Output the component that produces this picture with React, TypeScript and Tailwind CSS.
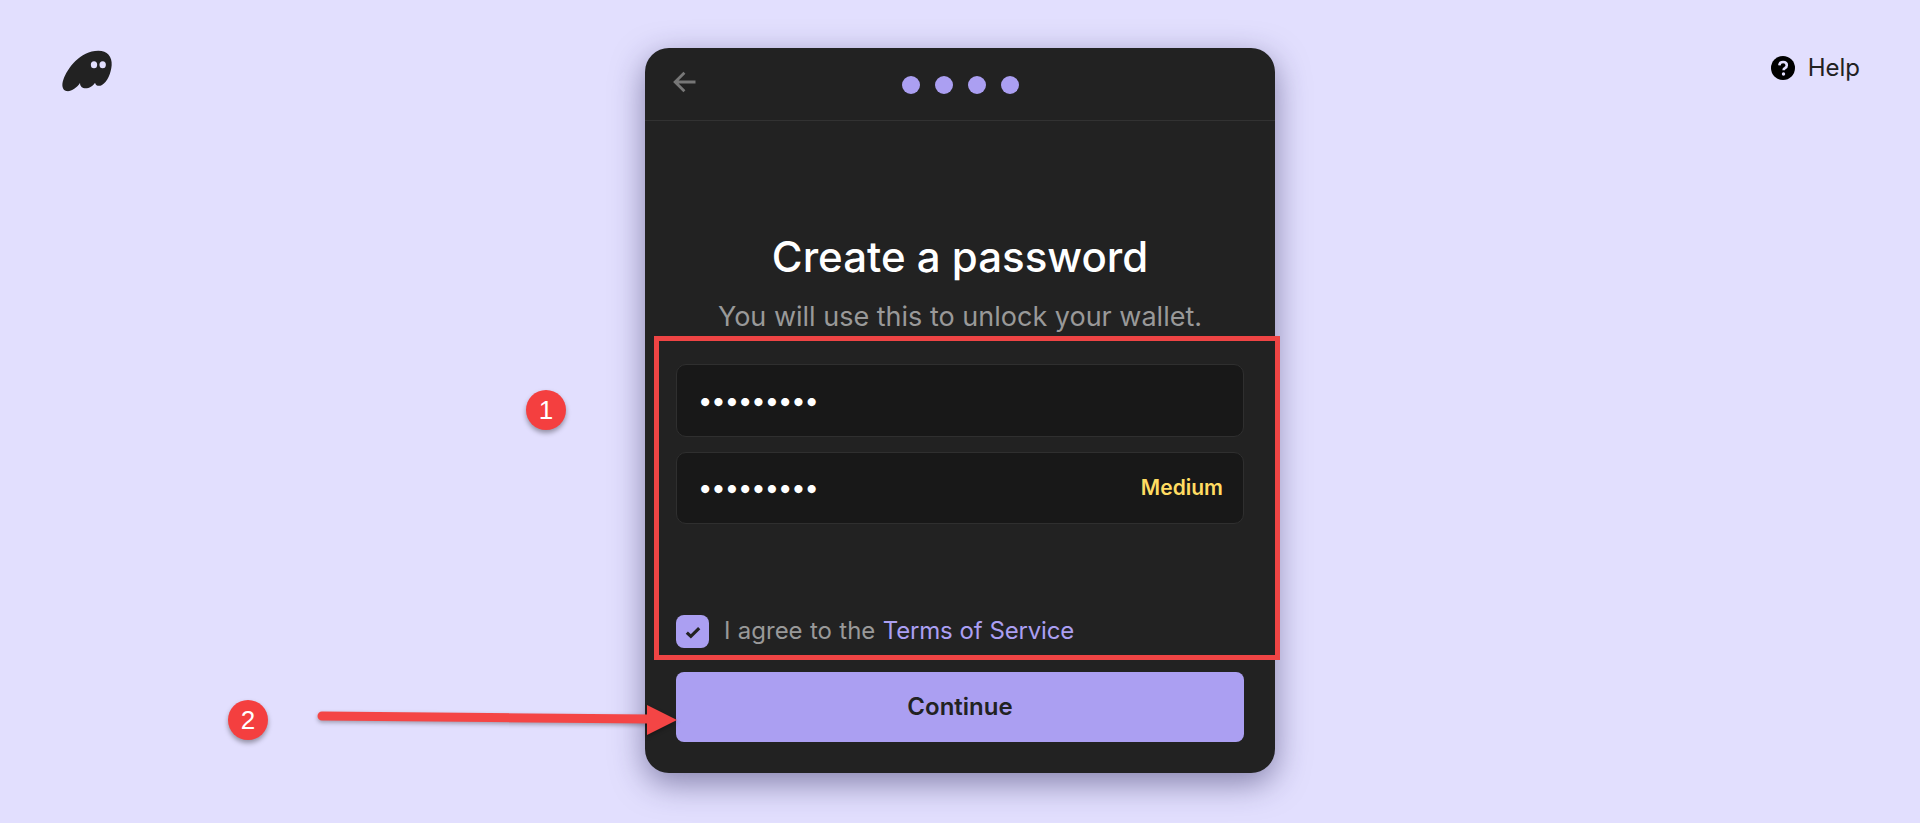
import React from "react";

const font = { fontFamily: "Inter, 'Liberation Sans', sans-serif" };

function Logo() {
  return (
    <svg viewBox="90 70 165 140" className="h-[46.67px] w-[55px]">
      <path
        fill="#222222"
        d="M205 78C232 78 247 96 245 122C243 146 232 172 216 181C207 186 198 184 195 174C188 186 172 194 160 190C153 188 150 182 150 175C140 190 122 202 109 199C97 196 94 181 100 165C112 131 150 78 205 78Z"
      />
      <ellipse cx="192" cy="120" rx="9.5" ry="10.5" fill="#e2dffe" />
      <ellipse cx="218" cy="120" rx="9.5" ry="10.5" fill="#e2dffe" />
    </svg>
  );
}

function PasswordField({ tall, children }: { tall?: boolean; children?: React.ReactNode }) {
  return (
    <div className={tall ? "flex h-[73px] items-center justify-between rounded-[10px] border border-[#2f2f2f] bg-[#181818] pl-[22px] pr-[20px]" : "flex h-[72px] items-center justify-between rounded-[10px] border border-[#2f2f2f] bg-[#181818] pl-[22px] pr-[20px]"}>
      <span className="text-[26px] font-bold leading-none tracking-[1px] text-white">•••••••••</span>
      {children}
    </div>
  );
}

export default function App() {
  return (
    <div style={font} className="relative grid h-[823px] grid-cols-[1fr_630px_1fr] overflow-hidden bg-[#e2dffe] pt-[48px]">
      <div className="pl-[60px]">
        <Logo />
      </div>

      <main className="flex h-[725px] flex-col rounded-[24px] bg-[#222222] shadow-[0_10px_32px_rgba(40,35,90,0.5)]">
        <header className="relative flex h-[73px] items-center justify-center border-b border-[#323232] pt-[2px]">
          <svg viewBox="0 0 24 24" className="absolute left-[26px] top-[20px] h-[28px] w-[28px] fill-none stroke-[#777777] stroke-[2.4]">
            <path d="M21 12H4M11.500 4L3.500 12l8 8" />
          </svg>
          <div className="flex gap-[15px]">
            <span className="h-[18px] w-[18px] rounded-full bg-[#ab9ff2]" />
            <span className="h-[18px] w-[18px] rounded-full bg-[#ab9ff2]" />
            <span className="h-[18px] w-[18px] rounded-full bg-[#ab9ff2]" />
            <span className="h-[18px] w-[18px] rounded-full bg-[#ab9ff2]" />
          </div>
        </header>

        <div className="flex flex-1 flex-col px-[31px]">
          <h1 className="mt-[111px] text-center text-[42px] font-medium leading-[50px] text-white">Create a password</h1>
          <p className="mt-[19px] text-center text-[27px] leading-[32px] text-[#999999]">You will use this to unlock your wallet.</p>
          <div className="mt-[31px] flex flex-col gap-[15px]">
            <PasswordField tall />
            <PasswordField>
              <span className="text-[21px] font-semibold text-[#ffdc62]">Medium</span>
            </PasswordField>
          </div>
          <label className="mt-[91px] flex items-center gap-[15px]">
            <span className="flex h-[33px] w-[33px] items-center justify-center rounded-[8px] bg-[#ab9ff2]">
              <svg viewBox="0 0 16 16" className="h-[18px] w-[18px] fill-none stroke-[#222222] stroke-[2.8]">
                <path d="M2.500 8.500l3.600 3.400L13.500 4.500" />
              </svg>
            </span>
            <span className="-translate-y-px text-[24px] leading-[30px] text-[#999999] [word-spacing:0.6px]">
              I agree to the <span className="tracking-[-0.2px] text-[#ab9ff2]">Terms of Service</span>
            </span>
          </label>
          <button className="mt-[24px] h-[70px] w-full rounded-[8px] bg-[#ab9ff2] text-[24px] font-semibold text-[#222222]">Continue</button>
        </div>
      </main>

      <div className="flex justify-end pr-[60px] pt-[5px]">
        <div className="flex h-[30px] items-center gap-[13px] text-[24px] text-[#222222]">
          <svg viewBox="0 0 24 24" className="h-[24px] w-[24px]">
            <circle cx="12" cy="12" r="12" fill="#000000" />
            <path d="M8.300 9.300C8.500 7.200 10 6 12.100 6c2.200 0 3.700 1.300 3.700 3.200 0 1.500-.8 2.300-1.900 3-1 .6-1.300 1-1.300 2" fill="none" stroke="#e2dffe" strokeWidth="2.600" />
            <circle cx="12.500" cy="18" r="1.700" fill="#e2dffe" />
          </svg>
          <span>Help</span>
        </div>
      </div>

      {/* Annotations drawn over the screenshot */}
      <div className="absolute left-[654px] top-[336px] h-[324px] w-[626px] border-[5px] border-[#ef4444]" />
      <div className="absolute left-[526px] top-[390px] flex h-[40px] w-[40px] items-center justify-center rounded-full bg-[#f43f3f] text-[26px] text-white shadow-[0_3px_5px_rgba(0,0,0,0.35)]" style={{ fontFamily: "'Liberation Sans', sans-serif" }}>1</div>
      <div className="absolute left-[228px] top-[700px] flex h-[40px] w-[40px] items-center justify-center rounded-full bg-[#f43f3f] text-[26px] text-white shadow-[0_3px_5px_rgba(0,0,0,0.35)]" style={{ fontFamily: "'Liberation Sans', sans-serif" }}>2</div>
      <svg className="absolute left-[310px] top-[700px] h-[40px] w-[375px] drop-shadow-[0_2px_2px_rgba(0,0,0,0.3)]" viewBox="0 0 375 40">
        <path d="M12 16L340 19" stroke="#f44545" strokeWidth="9" strokeLinecap="round" fill="none" />
        <path d="M337 5L367 20L337 35Z" fill="#f44545" />
      </svg>
    </div>
  );
}
